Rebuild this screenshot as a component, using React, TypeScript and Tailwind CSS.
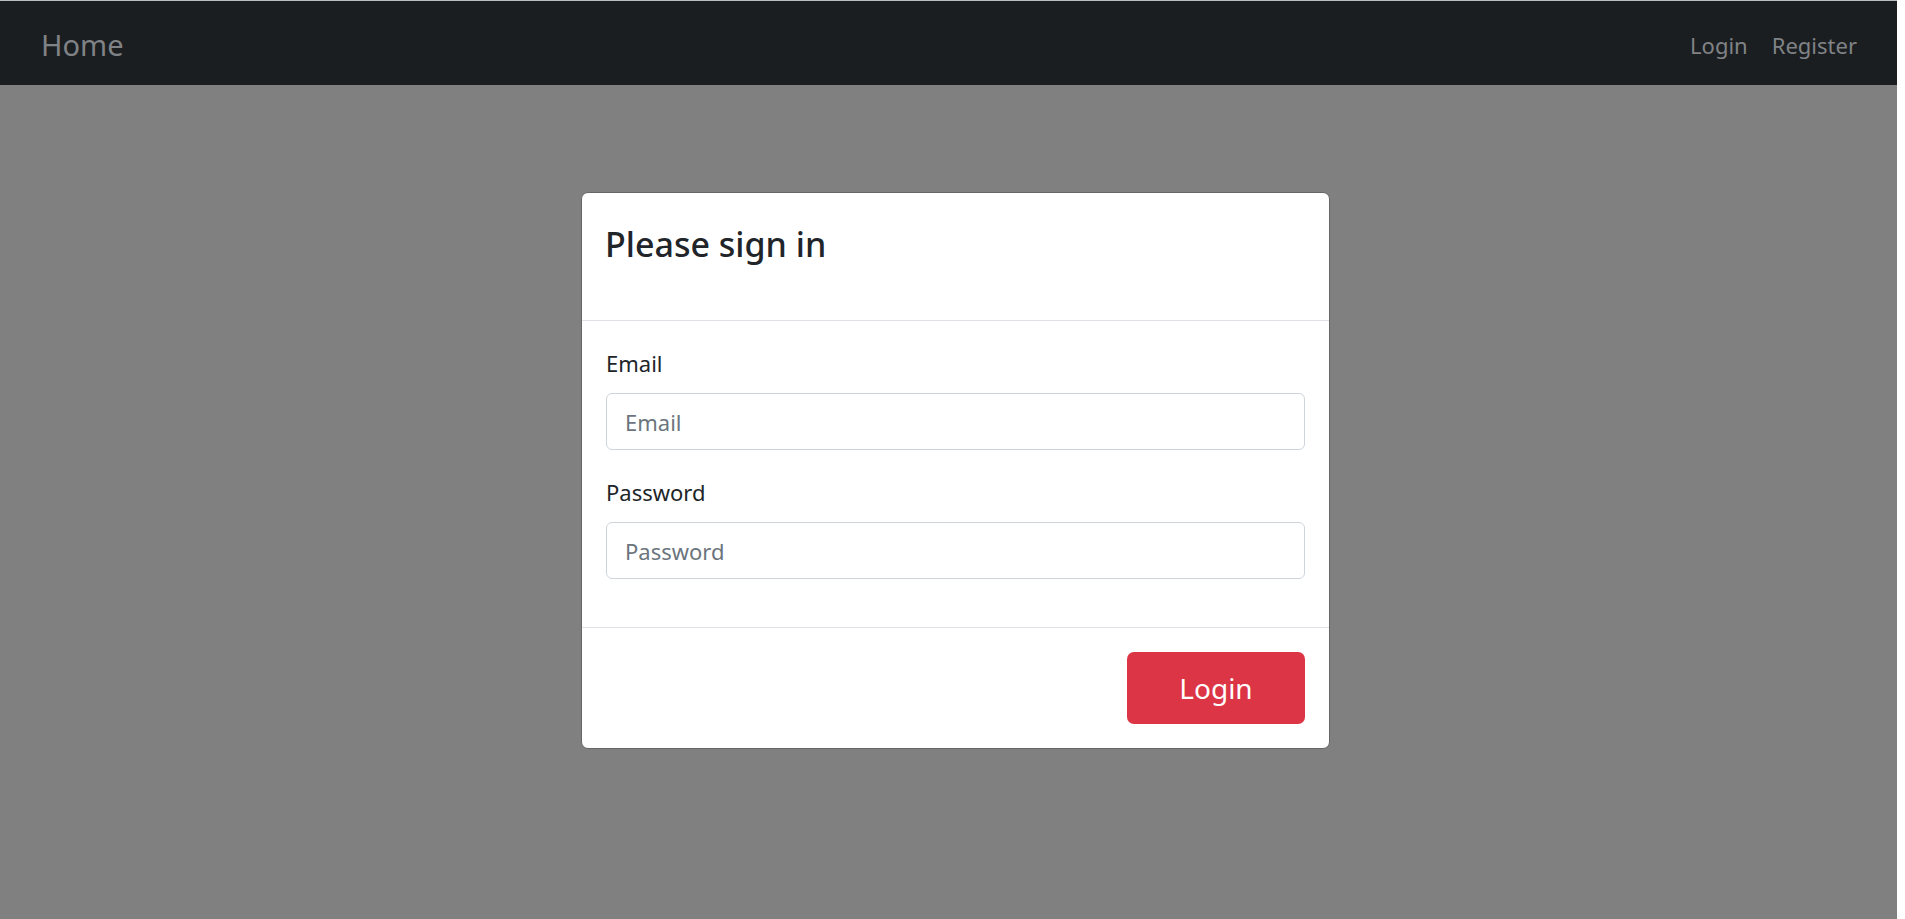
import React from "react";

export default function App() {
  return (
    <div className="flex h-[919px] w-full overflow-hidden bg-white font-['Noto_Sans','Liberation_Sans',sans-serif] text-[#212529]">
      <div className="flex w-[1897px] shrink-0 flex-col border-t border-[#bdbdbd] bg-[#808080]">
        <nav className="flex h-[84px] shrink-0 items-center justify-between bg-[#1b1e21] pl-[41px] pr-[40px] pt-[4px]">
          <span className="text-[29px] leading-[42px] text-[#808386]">Home</span>
          <div className="flex gap-[24px] text-[22px] leading-[33px] text-[#808386]">
            <span>Login</span>
            <span>Register</span>
          </div>
        </nav>
        <main className="flex justify-center pl-[14px] pt-[107px]">
          <div className="w-[749px] overflow-hidden rounded-[7px] border border-[#666666] bg-white">
            <div className="h-[128px] border-b border-[#dee2e6] pl-[23px] pt-[31px]">
              <h4 className="text-[34px] font-medium leading-[41px] text-[#212529]">Please sign in</h4>
            </div>
            <div className="p-[24px]">
              <div className="mb-[24px]">
                <label className="mb-[12px] block text-[22px] leading-[36px]">Email</label>
                <input
                  type="email"
                  placeholder="Email"
                  className="block h-[57px] w-full rounded-[6px] border border-[#ced4da] bg-white pl-[18px] text-[22px] text-[#495057] outline-none placeholder:text-[#6c757d]"
                />
              </div>
              <div className="mb-[24px]">
                <label className="mb-[12px] block text-[22px] leading-[36px]">Password</label>
                <input
                  type="password"
                  placeholder="Password"
                  className="block h-[57px] w-full rounded-[6px] border border-[#ced4da] bg-white pl-[18px] text-[22px] text-[#495057] outline-none placeholder:text-[#6c757d]"
                />
              </div>
            </div>
            <div className="flex justify-end border-t border-[#dee2e6] pb-[24px] pr-[24px] pt-[24px]">
              <button className="flex h-[72px] w-[178px] items-center justify-center rounded-[7px] bg-[#dc3545] text-[28px] text-white">
                Login
              </button>
            </div>
          </div>
        </main>
      </div>
      <div className="flex-1 bg-white" />
    </div>
  );
}
